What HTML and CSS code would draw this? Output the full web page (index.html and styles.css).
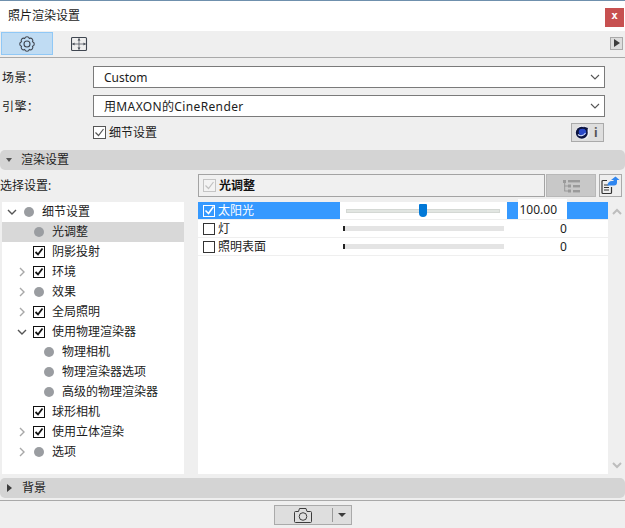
FILE: index.html
```html
<!DOCTYPE html>
<html lang="zh">
<head>
<meta charset="utf-8">
<title>照片渲染设置</title>
<link rel="stylesheet" href="styles.css">
</head>
<body>
<div class="window">
  <header class="titlebar">
    <span class="title">照片渲染设置</span>
    <button class="close">x</button>
  </header>

  <nav class="toolbar">
    <div class="tab active">
      <svg width="18" height="18" viewBox="0 0 18 18" class="ic"><path d="M6.7 3.46A2.4 2.4 0 0 1 11.3 3.46A2.4 2.4 0 0 1 14.54 6.7A2.4 2.4 0 0 1 14.54 11.3A2.4 2.4 0 0 1 11.3 14.54A2.4 2.4 0 0 1 6.7 14.54A2.4 2.4 0 0 1 3.46 11.3A2.4 2.4 0 0 1 3.46 6.7A2.4 2.4 0 0 1 6.7 3.46Z"/><circle cx="9" cy="9" r="3"/></svg>
    </div>
    <div class="tab">
      <svg width="17" height="16" viewBox="0 0 17 16" class="ic"><rect x="0.5" y="1.500" width="15" height="13" rx="1"/><path class="thin" d="M0.5 8H15.500M8 1.500V14.500"/><path class="solid" d="M8 2.500l-1.500 2h3zM8 13.500l-1.500-2h3zM1.500 8l2-1.500v3zM14.500 8l-2-1.500v3z"/></svg>
    </div>
    <div class="more"><span class="tri-right"></span></div>
  </nav>

  <section class="form">
    <label class="lbl">场景：</label>
    <div class="select"><span class="sel-text">Custom</span><svg width="10" height="6" viewBox="0 0 10 6" class="chev"><path d="M1 1l4 4 4-4"/></svg></div>
    <label class="lbl">引擎：</label>
    <div class="select"><span class="sel-text wide">用MAXON的CineRender</span><svg width="10" height="6" viewBox="0 0 10 6" class="chev"><path d="M1 1l4 4 4-4"/></svg></div>
    <div class="form-detail">
      <span class="cb gray-check"><svg width="13" height="13" viewBox="0 0 13 13"><path d="M2.5 6.5l3 3 5-6.5"/></svg></span>
      <span>细节设置</span>
      <div class="info">
        <svg width="15" height="15" viewBox="0 0 15 15"><circle cx="7.500" cy="7.500" r="7" fill="#f2f2f6"/><circle cx="6.800" cy="7.800" r="6" fill="#0c1440"/><ellipse cx="7.500" cy="7" rx="3.800" ry="3.200" fill="#2a49c8"/><path d="M3 9.500c2 2 5.500 1.600 7.500-1.500" fill="none" stroke="#cfdcff" stroke-width="1.100"/><path d="M8.500 1.500l4.500 1.500-1 4.500z" fill="#0c1440"/></svg>
        <span class="i">i</span>
      </div>
    </div>
  </section>

  <div class="section"><span class="tri-down"></span><span>渲染设置</span></div>

  <div class="choose">
    <span class="choose-label">选择设置:</span>
    <div class="choose-box">
      <span class="cb disabled"><svg width="13" height="13" viewBox="0 0 13 13"><path d="M2.5 6.5l3 3 5-6.5"/></svg></span>
      <b>光调整</b>
    </div>
    <div class="btn-list">
      <svg width="17" height="14" viewBox="0 0 17 14" fill="#9a9a9a"><rect x="0" y="1" width="3" height="3"/><rect x="5" y="1" width="12" height="2.400"/><rect x="5" y="5.500" width="3" height="3"/><rect x="10" y="6" width="7" height="2.400"/><rect x="5" y="10.500" width="3" height="3"/><rect x="10" y="11" width="7" height="2.400"/><rect x="1.200" y="4" width="1" height="8"/><rect x="1.200" y="6.500" width="4" height="1"/><rect x="1.200" y="11.500" width="4" height="1"/></svg>
    </div>
    <div class="btn-doc">
      <svg width="19" height="19" viewBox="0 0 19 19"><path d="M6 4.500H2a1 1 0 0 0-1 1V16.500a1 1 0 0 0 1 1h7.500a1 1 0 0 0 1-1V11" fill="none" stroke="#333" stroke-width="1.200"/><path d="M3 9h4.500M3 11.500h5M3 14h5" stroke="#333" stroke-width="1.100"/><path d="M6.500 9.500c0-3 2-4.500 4.500-4.500h1.500V4H10l4.500-3.500L18.500 4H16v2.500a3 3 0 0 1-3 3z" fill="#2f86f0"/></svg>
    </div>
  </div>

  <div class="panes">
    <div class="tree">
      <div class="node l0"><span class="arr"><svg width="10" height="6" viewBox="0 0 10 6" class="open"><path d="M1 1l4 4 4-4"/></svg></span><span class="slot"><span class="dot"></span></span><span>细节设置</span></div>
      <div class="node l1 sel"><span class="arr"></span><span class="slot"><span class="dot"></span></span><span>光调整</span></div>
      <div class="node l1"><span class="arr"></span><span class="slot"><span class="cb on"><svg width="10" height="10" viewBox="0 0 10 10"><path d="M1.500 5l2.500 2.500 4.500-6"/></svg></span></span><span>阴影投射</span></div>
      <div class="node l1"><span class="arr"><svg width="6" height="10" viewBox="0 0 6 10" class="closed"><path d="M1 1l4 4-4 4"/></svg></span><span class="slot"><span class="cb on"><svg width="10" height="10" viewBox="0 0 10 10"><path d="M1.500 5l2.500 2.500 4.500-6"/></svg></span></span><span>环境</span></div>
      <div class="node l1"><span class="arr"><svg width="6" height="10" viewBox="0 0 6 10" class="closed"><path d="M1 1l4 4-4 4"/></svg></span><span class="slot"><span class="dot"></span></span><span>效果</span></div>
      <div class="node l1"><span class="arr"><svg width="6" height="10" viewBox="0 0 6 10" class="closed"><path d="M1 1l4 4-4 4"/></svg></span><span class="slot"><span class="cb on"><svg width="10" height="10" viewBox="0 0 10 10"><path d="M1.500 5l2.500 2.500 4.500-6"/></svg></span></span><span>全局照明</span></div>
      <div class="node l1"><span class="arr"><svg width="10" height="6" viewBox="0 0 10 6" class="open"><path d="M1 1l4 4 4-4"/></svg></span><span class="slot"><span class="cb on"><svg width="10" height="10" viewBox="0 0 10 10"><path d="M1.500 5l2.500 2.500 4.500-6"/></svg></span></span><span>使用物理渲染器</span></div>
      <div class="node l2"><span class="arr"></span><span class="slot"><span class="dot"></span></span><span>物理相机</span></div>
      <div class="node l2"><span class="arr"></span><span class="slot"><span class="dot"></span></span><span>物理渲染器选项</span></div>
      <div class="node l2"><span class="arr"></span><span class="slot"><span class="dot"></span></span><span>高级的物理渲染器</span></div>
      <div class="node l1"><span class="arr"></span><span class="slot"><span class="cb on"><svg width="10" height="10" viewBox="0 0 10 10"><path d="M1.500 5l2.500 2.500 4.500-6"/></svg></span></span><span>球形相机</span></div>
      <div class="node l1"><span class="arr"><svg width="6" height="10" viewBox="0 0 6 10" class="closed"><path d="M1 1l4 4-4 4"/></svg></span><span class="slot"><span class="cb on"><svg width="10" height="10" viewBox="0 0 10 10"><path d="M1.500 5l2.500 2.500 4.500-6"/></svg></span></span><span>使用立体渲染</span></div>
      <div class="node l1"><span class="arr"><svg width="6" height="10" viewBox="0 0 6 10" class="closed"><path d="M1 1l4 4-4 4"/></svg></span><span class="slot"><span class="dot"></span></span><span>选项</span></div>
    </div>

    <div class="props">
      <div class="prop-list">
        <div class="prop">
          <div class="prop-name hi"><span class="cb white"><svg width="11" height="11" viewBox="0 0 11 11"><path d="M1.500 5.500l3 3 5-7"/></svg></span><span>太阳光</span></div>
          <div class="prop-slider"><div class="track-on"><span class="thumb"></span></div></div>
          <div class="prop-value hi-value"><span class="input">100.00</span></div>
        </div>
        <div class="prop">
          <div class="prop-name"><span class="cb plain"></span><span>灯</span></div>
          <div class="prop-slider"><div class="track-off"></div></div>
          <div class="prop-value"><span class="zero">0</span></div>
        </div>
        <div class="prop">
          <div class="prop-name"><span class="cb plain"></span><span>照明表面</span></div>
          <div class="prop-slider"><div class="track-off"></div></div>
          <div class="prop-value"><span class="zero">0</span></div>
        </div>
      </div>
      <div class="scroll">
        <svg width="10" height="7" viewBox="0 0 10 7"><path d="M1 6l4-4 4 4"/></svg>
        <svg width="10" height="7" viewBox="0 0 10 7"><path d="M1 1l4 4 4-4"/></svg>
      </div>
    </div>
  </div>

  <div class="section bg"><span class="tri-right small"></span><span>背景</span></div>

  <footer class="footer">
    <div class="shot">
      <svg width="18" height="15" viewBox="0 0 18 15" class="cam"><path d="M0.500 4.500a1 1 0 0 1 1-1H4.500L5.500 0.500H12L13 3.500h3.500a1 1 0 0 1 1 1V13.500a1 1 0 0 1-1 1h-15a1 1 0 0 1-1-1z"/><circle cx="9" cy="8.500" r="3.800"/></svg>
      <span class="sep"></span>
      <span class="tri-down dark"></span>
    </div>
  </footer>
</div>
</body>
</html>
```
FILE: styles.css
```css
* { box-sizing: border-box; }
html, body { margin: 0; padding: 0; }
body {
  width: 625px;
  height: 528px;
  overflow: hidden;
  background: #efefef;
  font-family: "Noto Sans", "Noto Sans CJK SC", sans-serif;
  font-size: 12px;
  line-height: 16px;
  color: #1c1c1c;
}
svg { display: block; }
.window { display: flex; flex-direction: column; height: 528px; border-top: 1px solid #6f90ad; }

.titlebar { height: 30px; background: #fff; display: flex; align-items: center; justify-content: space-between; padding: 0 1px 0 8px; }
.title { font-size: 12px; }
.close {
  width: 19px; height: 19px; margin-top: 3px; padding: 0 0 3px; border: 0; background: #c75050; color: #fff;
  font-family: "DejaVu Sans Mono", monospace; font-size: 11px; font-weight: bold; line-height: 16px;
}

.toolbar { height: 27px; border-bottom: 1px solid #a9a9a9; display: flex; align-items: center; padding: 0 2px 0 1px; }
.tab { width: 52px; height: 23px; display: flex; align-items: center; justify-content: center; margin-top: -1px; border: 1px solid transparent; }
.tab.active { background: #c0dcf3; border-color: #90c8f6; }
.ic { fill: none; stroke: #3f4650; stroke-width: 1.100; }
.ic .thin { stroke-width: 0.700; }
.ic .solid { fill: #3f4650; stroke: none; }
.more { width: 13px; height: 13px; margin-left: auto; background: #ddd; border: 1px solid #aaa; display: flex; align-items: center; justify-content: center; margin-top: -2px; }
.tri-right { width: 0; height: 0; border-style: solid; border-width: 4px 0 4px 6px; border-color: transparent transparent transparent #3c3c3c; }
.tri-right.small { border-width: 4px 0 4px 5px; margin-left: 7px; margin-right: 10px; }
.tri-down { width: 0; height: 0; border-style: solid; border-width: 4px 3.500px 0; border-color: #555 transparent transparent; margin-left: 6px; margin-right: 9px; }

.form { display: grid; grid-template-columns: 91px 512px; row-gap: 7px; padding: 8px 0 0 2px; align-items: center; }
.lbl { font-size: 12px; letter-spacing: .4px; padding-top: 1px; }
.select { height: 22px; background: #fff; border: 1px solid #7a7a7a; display: flex; align-items: center; justify-content: space-between; padding: 0 4px 0 10px; }
.sel-text { padding-top: 1px; }
.sel-text.wide { letter-spacing: .36px; }
.select .chev, .open { fill: none; stroke: #555; stroke-width: 1.100; }
.form-detail { grid-column: 2; display: flex; align-items: center; gap: 3px; margin-top: -1px; height: 19px; padding-right: 1px; }
.cb { width: 13px; height: 13px; flex: none; border: 1px solid #333; display: flex; align-items: center; justify-content: center; }
.cb svg { fill: none; flex: none; }
.gray-check { border-color: #555; background: #fff; }
.gray-check svg { stroke: #555; stroke-width: 1.200; }
.info { margin-left: auto; width: 33px; height: 19px; background: #dedede; border: 1px solid #aaa; display: flex; align-items: center; padding-left: 3px; gap: 4px; }
.i { font-weight: bold; color: #555; font-size: 12px; }

.section { height: 20px; margin-top: 8px; background: #d4d4d4; border-radius: 5px; display: flex; align-items: center; }
.section.bg { margin-top: 4px; }

.choose { display: flex; height: 23px; margin-top: 4px; padding-right: 3px; align-items: stretch; }
.choose-label { width: 198px; line-height: 23px; }
.choose-box { width: 347px; border: 1px solid #a3a3a3; display: flex; align-items: center; gap: 3px; padding-left: 4px; background: #f0f0f0; }
.choose-box b { font-weight: bold; color: #111; }
.cb.disabled { border-color: #c4c4c4; background: #f3f3f3; }
.cb.disabled svg { stroke: #c0c0c0; stroke-width: 1.200; }
.btn-list { width: 50px; margin-left: 1px; background: #c8c8c8; border: 1px solid #b8b8b8; display: flex; align-items: center; justify-content: center; }
.btn-doc { width: 23px; margin-left: 3px; background: #eee; border: 1px solid #aaa; display: flex; align-items: center; justify-content: center; }

.panes { display: flex; height: 272px; margin-top: 5px; padding-left: 2px; }
.tree { width: 182px; background: #fff; display: flex; flex-direction: column; }
.node { height: 20px; display: flex; align-items: center; flex: none; }
.node.l0 { padding-left: 4px; }
.node.l1 { padding-left: 14px; }
.node.l2 { padding-left: 24px; }
.node.sel { background: #d8d8d8; }
.arr { width: 12px; margin-right: 5px; display: flex; justify-content: center; flex: none; }
.slot { width: 12px; margin-right: 7px; display: flex; justify-content: center; flex: none; }
.dot { width: 10px; height: 10px; border-radius: 50%; background: #9a9da1; flex: none; }
.closed { fill: none; stroke: #a8a8a8; stroke-width: 1.400; }
.open { stroke: #555; stroke-width: 1.400; }
.cb.on { width: 12px; height: 12px; border-color: #111; background: #fff; }
.cb.on svg { stroke: #111; stroke-width: 1.800; }
.cb.plain { width: 12px; height: 12px; border-color: #333; background: #fff; }

.props { width: 424px; margin-left: 14px; display: flex; }
.prop-list { width: 410px; background: #fff; display: flex; flex-direction: column; }
.prop { height: 18px; display: flex; border-bottom: 1px solid #efefef; flex: none; }
.prop-name { width: 142px; display: flex; align-items: center; gap: 3px; padding-left: 5px; }
.prop-name.hi { background: #3599ff; color: #fff; }
.cb.white { width: 12px; height: 12px; border-color: #fff; background: #3599ff; }
.cb.white svg { stroke: #fff; stroke-width: 1.600; }
.prop-slider { width: 167px; padding: 0 3px 0 3px; display: flex; align-items: center; }
.track-on { width: 154px; height: 4px; margin-left: 3px; background: #e2e6e2; border: 1px solid #d4d8d4; display: flex; align-items: center; padding-left: 72px; }
.thumb { width: 8px; height: 13px; background: #0078d7; border-radius: 1px 1px 4px 4px; flex: none; }
.track-off { width: 161px; height: 5px; background: #e4e4e4; border-left: 2px solid #222; }
.prop-value { flex: 1; display: flex; line-height: 18px; }
.hi-value { background: #3599ff; padding-left: 11px; height: 17px; }
.input { width: 49px; height: 20px; margin-top: -3px; background: #fff; line-height: 21px; text-align: right; padding-right: 10px; }
.zero { margin-left: 53px; }
.scroll { width: 14px; display: flex; flex-direction: column; align-items: center; justify-content: space-between; padding: 6px 0 5px 3px; }
.scroll svg { fill: none; stroke: #bdbdbd; stroke-width: 2; }

.footer { margin-top: 2px; border-top: 1px solid #a9a9a9; padding-top: 4px; display: flex; justify-content: center; }
.shot { width: 78px; height: 20px; background: #dedede; border: 1px solid #aaa; display: flex; align-items: center; padding-left: 19px; }
.cam { fill: none; stroke: #3c3c3c; stroke-width: 1; flex: none; }
.sep { width: 1px; height: 14px; background: #999; margin-left: 20px; }
.tri-down.dark { border-width: 4px 4px 0; border-color: #3c3c3c transparent transparent; margin-left: 5px; margin-right: 0; }
```
